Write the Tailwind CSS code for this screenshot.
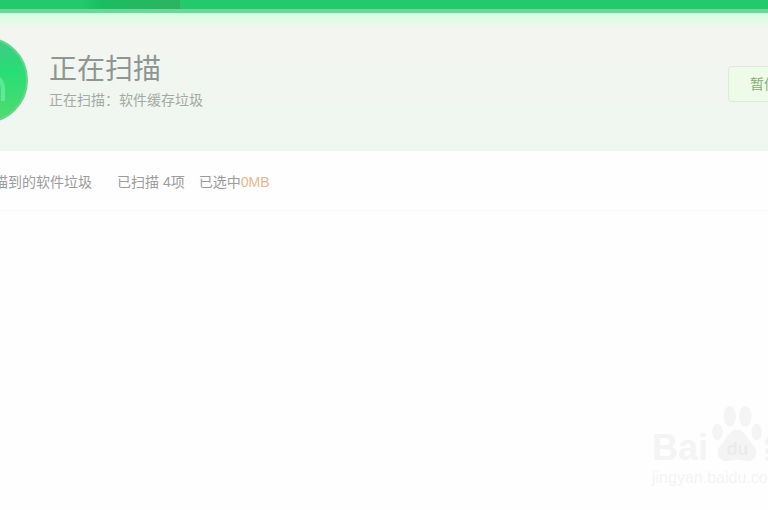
<!DOCTYPE html>
<html lang="zh-CN">
<head>
    <meta charset="UTF-8">
    <meta name="viewport" content="width=device-width, initial-scale=1.0">
    <title>正在扫描</title>
    <script src="https://cdn.jsdelivr.net/npm/@tailwindcss/browser@4"></script>
</head>
<body class="min-h-screen overflow-hidden flex flex-col bg-[#fefefe] font-['Liberation_Sans','Noto_Sans_CJK_SC',sans-serif]">
    <!-- top bar -->
    <nav class="h-[13px] pl-[80px] bg-[#23ca6b] border-b-4 border-[#78d298]">
        <div class="w-[100px] h-full bg-linear-to-r from-[#23ca6b] via-[#18be60] via-20% to-[#2bb45f]"></div>
    </nav>
    <!-- scan status -->
    <header class="h-[138px] flex items-center overflow-hidden bg-linear-to-b from-[#d3ffe0] via-[#f3f5f1] via-12% to-[#eff6f0]">
        <svg class="size-[86px] -ml-[58px] mb-1 shrink-0" viewBox="0 0 86 86" aria-hidden="true">
            <defs>
                <linearGradient id="disc" x1="0" y1="0" x2="0" y2="1">
                    <stop offset="0" stop-color="#42c987"/>
                    <stop offset=".4" stop-color="#27de75"/>
                    <stop offset="1" stop-color="#52db70"/>
                </linearGradient>
            </defs>
            <circle cx="43" cy="43" r="42" fill="url(#disc)" stroke="#67d58e" stroke-width="2"/>
            <path d="M29 64V52a16 16 0 0 1 32 0v12" fill="none" stroke="#7df0aa" stroke-width="4" opacity=".6"/>
        </svg>
        <div class="grow pl-[21px]">
            <h1 class="text-[28px] leading-9 text-[#8f9590]">正在扫描</h1>
            <p class="text-sm leading-6 text-[#a3a9a4]">正在扫描：软件缓存垃圾</p>
        </div>
        <button type="button" class="w-[76px] h-9 -mr-9 pl-[21px] mt-1 shrink-0 text-left whitespace-nowrap rounded-sm border border-[#dfe7df] bg-[#effbe9] text-sm text-[#86ac78]">暂停</button>
    </header>
    <!-- result summary -->
    <div class="h-[60px] pt-[2px] flex items-center overflow-hidden whitespace-nowrap border-b border-[#f8f8f8] text-sm text-[#9b9b9b]">
        <div class="w-[92px] flex justify-end shrink-0">扫描到的软件垃圾</div>
        <div class="pl-[25px]">已扫描 4项</div>
        <div class="pl-[14px]">已选中<span class="text-[#eab68c]">0MB</span></div>
    </div>
    <!-- watermark -->
    <main class="grow flex justify-end items-end overflow-hidden pb-[22px]">
        <div class="w-[116px] whitespace-nowrap text-[#f4f4f4]">
            <div class="flex items-end h-[62px]">
                <span class="text-4xl leading-10 font-bold">Bai</span>
                <svg class="w-[56px] h-[60px] mb-1 shrink-0" viewBox="0 0 50 58" fill="currentColor" aria-hidden="true">
                    <ellipse cx="19" cy="12" rx="6" ry="10"/>
                    <ellipse cx="34" cy="12" rx="6" ry="10"/>
                    <ellipse cx="7" cy="27" rx="5" ry="8"/>
                    <ellipse cx="45" cy="27" rx="5" ry="8"/>
                    <path d="M26 25c8 0 9 8 15 14 8 8 2 18-7 16-6-1-10-1-16 0-9 2-15-8-7-16 6-6 7-14 15-14z"/>
                    <text x="16" y="49" font-size="17" font-weight="bold" fill="#ebebeb">du</text>
                </svg>
                <span class="text-4xl leading-10 font-bold">经验</span>
            </div>
            <div class="text-base leading-5">jingyan.baidu.com</div>
        </div>
    </main>
</body>
</html>
